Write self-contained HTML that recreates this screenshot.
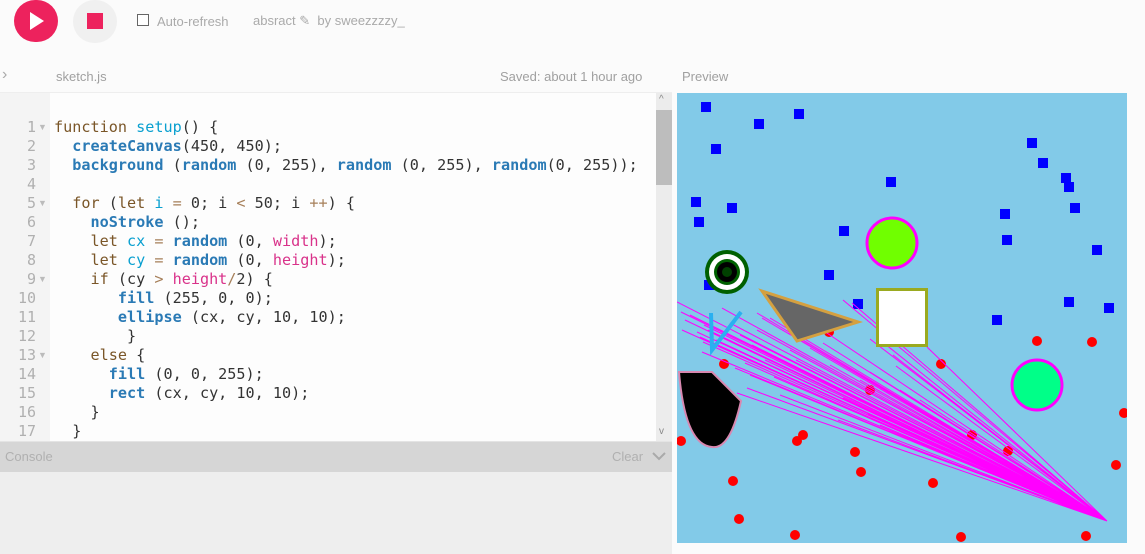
<!DOCTYPE html>
<html><head><meta charset="utf-8"><style>
*{margin:0;padding:0;box-sizing:border-box}
body{width:1145px;height:554px;background:#fbfbfb;font-family:"Liberation Sans",sans-serif;position:relative;overflow:hidden}
.abs{position:absolute}
.code{font-family:"DejaVu Sans Mono","Liberation Mono",monospace;font-size:15px;line-height:19px;white-space:pre;color:#333;transform:scaleX(1.01);transform-origin:0 0}
.k{color:#7a5628}.f{color:#2a7ab5;font-weight:bold}.v{color:#0aa0d0}.m{color:#d9328a}.o{color:#a67f59}
.ln{font-family:"DejaVu Sans Mono","Liberation Mono",monospace;font-size:15px;line-height:19px;color:#b0b0b0;text-align:right;white-space:pre}
</style></head><body>
<div class="abs" style="left:14px;top:0;width:44px;height:42px;border-radius:22px;background:#ed225d"></div>
<svg class="abs" style="left:27px;top:10px" width="20" height="22"><path d="M3 2 L17 11 L3 20Z" fill="#fff"/></svg>
<div class="abs" style="left:73px;top:0;width:44px;height:43px;border-radius:22px;background:#f0f0f0"></div>
<div class="abs" style="left:87px;top:13px;width:16px;height:16px;background:#ed225d"></div>
<div class="abs" style="left:137px;top:14px;width:12px;height:12px;border:1px solid #666;background:#fff"></div>
<div class="abs" style="left:157px;top:14px;font-size:13px;color:#aaa">Auto-refresh</div>
<div class="abs" style="left:253px;top:13px;font-size:13px;color:#aaa">absract ✎ &nbsp;by sweezzzzy_</div>
<div class="abs" style="left:2px;top:66px;font-size:16px;color:#aaa">›</div>
<div class="abs" style="left:56px;top:69px;font-size:13px;color:#a0a0a0">sketch.js</div>
<div class="abs" style="left:500px;top:69px;font-size:13px;color:#a0a0a0">Saved: about 1 hour ago</div>
<div class="abs" style="left:682px;top:69px;font-size:13px;color:#a0a0a0">Preview</div>
<div class="abs" style="left:0;top:92px;width:672px;height:1px;background:#eee"></div>
<div class="abs" style="left:0;top:93px;width:50px;height:348px;background:#f4f4f4"></div>
<div class="abs" style="left:50px;top:93px;width:606px;height:348px;background:#fdfdfd"></div>
<div class="abs" style="left:656px;top:93px;width:16px;height:348px;background:#ececec"></div>
<div class="abs" style="left:656px;top:110px;width:16px;height:75px;background:#bdbdbd"></div>
<div class="abs" style="left:659px;top:94px;font-size:10px;color:#888">^</div>
<div class="abs" style="left:659px;top:426px;font-size:10px;color:#888">v</div>
<div class="abs ln" style="left:0;top:118px;width:36px">1
2
3
4
5
6
7
8
9
10
11
12
13
14
15
16
17</div>
<div class="abs" style="left:38px;top:118px;font-size:9px;color:#bbb;line-height:19px;white-space:pre">▼



▼



▼



▼</div>
<div class="abs code" style="left:54px;top:118px"><span class="k">function</span> <span class="v">setup</span>() {
  <span class="f">createCanvas</span>(450, 450);
  <span class="f">background</span> (<span class="f">random</span> (0, 255), <span class="f">random</span> (0, 255), <span class="f">random</span>(0, 255));

  <span class="k">for</span> (<span class="k">let</span> <span class="v">i</span> <span class="o">=</span> 0; i <span class="o">&lt;</span> 50; i <span class="o">++</span>) {
    <span class="f">noStroke</span> ();
    <span class="k">let</span> <span class="v">cx</span> <span class="o">=</span> <span class="f">random</span> (0, <span class="m">width</span>);
    <span class="k">let</span> <span class="v">cy</span> <span class="o">=</span> <span class="f">random</span> (0, <span class="m">height</span>);
    <span class="k">if</span> (cy <span class="o">&gt;</span> <span class="m">height</span><span class="o">/</span>2) {
       <span class="f">fill</span> (255, 0, 0);
       <span class="f">ellipse</span> (cx, cy, 10, 10);
        }
    <span class="k">else</span> {
      <span class="f">fill</span> (0, 0, 255);
      <span class="f">rect</span> (cx, cy, 10, 10);
    }
  }</div>
<div class="abs" style="left:0;top:441px;width:672px;height:2px;background:#e4e4e4"></div>
<div class="abs" style="left:0;top:442px;width:672px;height:30px;background:#d6d6d6"></div>
<div class="abs" style="left:5px;top:449px;font-size:13px;color:#b0b0b0">Console</div>
<div class="abs" style="left:612px;top:449px;font-size:13px;color:#b0b0b0">Clear</div>
<svg class="abs" style="left:651px;top:450px" width="16" height="12"><path d="M2 3 L8 9 L14 3" stroke="#aaa" stroke-width="2" fill="none"/></svg>
<div class="abs" style="left:0;top:472px;width:672px;height:82px;background:#eeeeee"></div>
<svg class="abs" style="left:677px;top:93px" width="450" height="450" viewBox="677 93 450 450">
<rect x="677" y="93" width="450" height="450" fill="#82cae8"/>
<g fill="#0000ff">
<rect x="701" y="102" width="10" height="10"/><rect x="754" y="119" width="10" height="10"/><rect x="794" y="109" width="10" height="10"/><rect x="711" y="144" width="10" height="10"/><rect x="691" y="197" width="10" height="10"/><rect x="727" y="203" width="10" height="10"/><rect x="694" y="217" width="10" height="10"/><rect x="886" y="177" width="10" height="10"/><rect x="839" y="226" width="10" height="10"/><rect x="824" y="270" width="10" height="10"/><rect x="853" y="299" width="10" height="10"/><rect x="1027" y="138" width="10" height="10"/><rect x="1038" y="158" width="10" height="10"/><rect x="1061" y="173" width="10" height="10"/><rect x="1064" y="182" width="10" height="10"/><rect x="1070" y="203" width="10" height="10"/><rect x="1000" y="209" width="10" height="10"/><rect x="1002" y="235" width="10" height="10"/><rect x="1092" y="245" width="10" height="10"/><rect x="1064" y="297" width="10" height="10"/><rect x="1104" y="303" width="10" height="10"/><rect x="992" y="315" width="10" height="10"/><rect x="704" y="280" width="10" height="10"/>
</g>
<g fill="#ff0000">
<circle cx="724" cy="364" r="5"/><circle cx="681" cy="441" r="5"/><circle cx="797" cy="441" r="5"/><circle cx="803" cy="435" r="5"/><circle cx="855" cy="452" r="5"/><circle cx="861" cy="472" r="5"/><circle cx="733" cy="481" r="5"/><circle cx="739" cy="519" r="5"/><circle cx="795" cy="535" r="5"/><circle cx="933" cy="483" r="5"/><circle cx="961" cy="537" r="5"/><circle cx="1086" cy="536" r="5"/><circle cx="1116" cy="465" r="5"/><circle cx="1124" cy="413" r="5"/><circle cx="1037" cy="341" r="5"/><circle cx="1092" cy="342" r="5"/><circle cx="941" cy="364" r="5"/><circle cx="870" cy="390" r="5"/><circle cx="972" cy="435" r="5"/><circle cx="1008" cy="451" r="5"/><circle cx="829" cy="332" r="5"/>
</g>
<g stroke="#ff00ff" stroke-width="1" fill="none">
<path d="M1107 521L677 302M1107 521L681 312M1107 521L685 320M1107 521L682 330M1107 521L697 332M1107 521L700 337M1107 521L703 342M1107 521L722 308M1107 521L730 323M1107 521L757 313M1107 521L762 318M1107 521L770 318M1107 521L757 330M1107 521L788 333M1107 521L803 340M1107 521L790 350M1107 521L843 300M1107 521L852 303M1107 521L870 339M1107 521L896 366M1107 521L868 414M1107 521L745 363M1107 521L735 368M1107 521L737 393M1107 521L747 388M1107 521L776 385M1107 521L843 398M1107 521L880 340M1107 521L927 347M1107 521L702 352M1107 521L716 340M1107 521L752 345M1107 521L815 325M1107 521L870 372M1107 521L774 377M1107 521L796 360M1107 521L810 348M1107 521L893 355M1107 521L823 343M1107 521L704 325M1107 521L690 315M1107 521L708 330M1107 521L740 335M1107 521L765 360M1107 521L830 365M1107 521L860 380M1107 521L900 390M1107 521L780 395M1107 521L750 375M1107 521L838 420M1107 521L880 425M1107 521L920 400"/>
</g>
<circle cx="727" cy="272" r="22" fill="#006000"/><circle cx="727" cy="272" r="18" fill="#fff"/><circle cx="727" cy="272" r="13" fill="#006000"/><circle cx="727" cy="272" r="10" fill="#000"/><circle cx="727" cy="272" r="5" fill="#004000"/>
<circle cx="892" cy="243" r="25" fill="#70ff00" stroke="#ff00ff" stroke-width="3"/>
<circle cx="1037" cy="385" r="25" fill="#00ff88" stroke="#ff00ff" stroke-width="3"/>
<polygon points="762,291 858,322 797,341" fill="#666" stroke="#d4a040" stroke-width="3"/>
<rect x="877.5" y="289.5" width="49" height="56" fill="#fff" stroke="#9aaa20" stroke-width="3"/>
<path d="M711 313 L712 350 L741 312" fill="none" stroke="#2ab0f0" stroke-width="4"/>
<path d="M679 372 L712 372 L741 401 Q730 450 712 447 Q685 445 679 372Z" fill="#000" stroke="#d888b0" stroke-width="2"/>
</svg>
<div class="abs" style="left:672px;top:93px;width:5px;height:461px;background:#fbfbfb"></div>
</body></html>
